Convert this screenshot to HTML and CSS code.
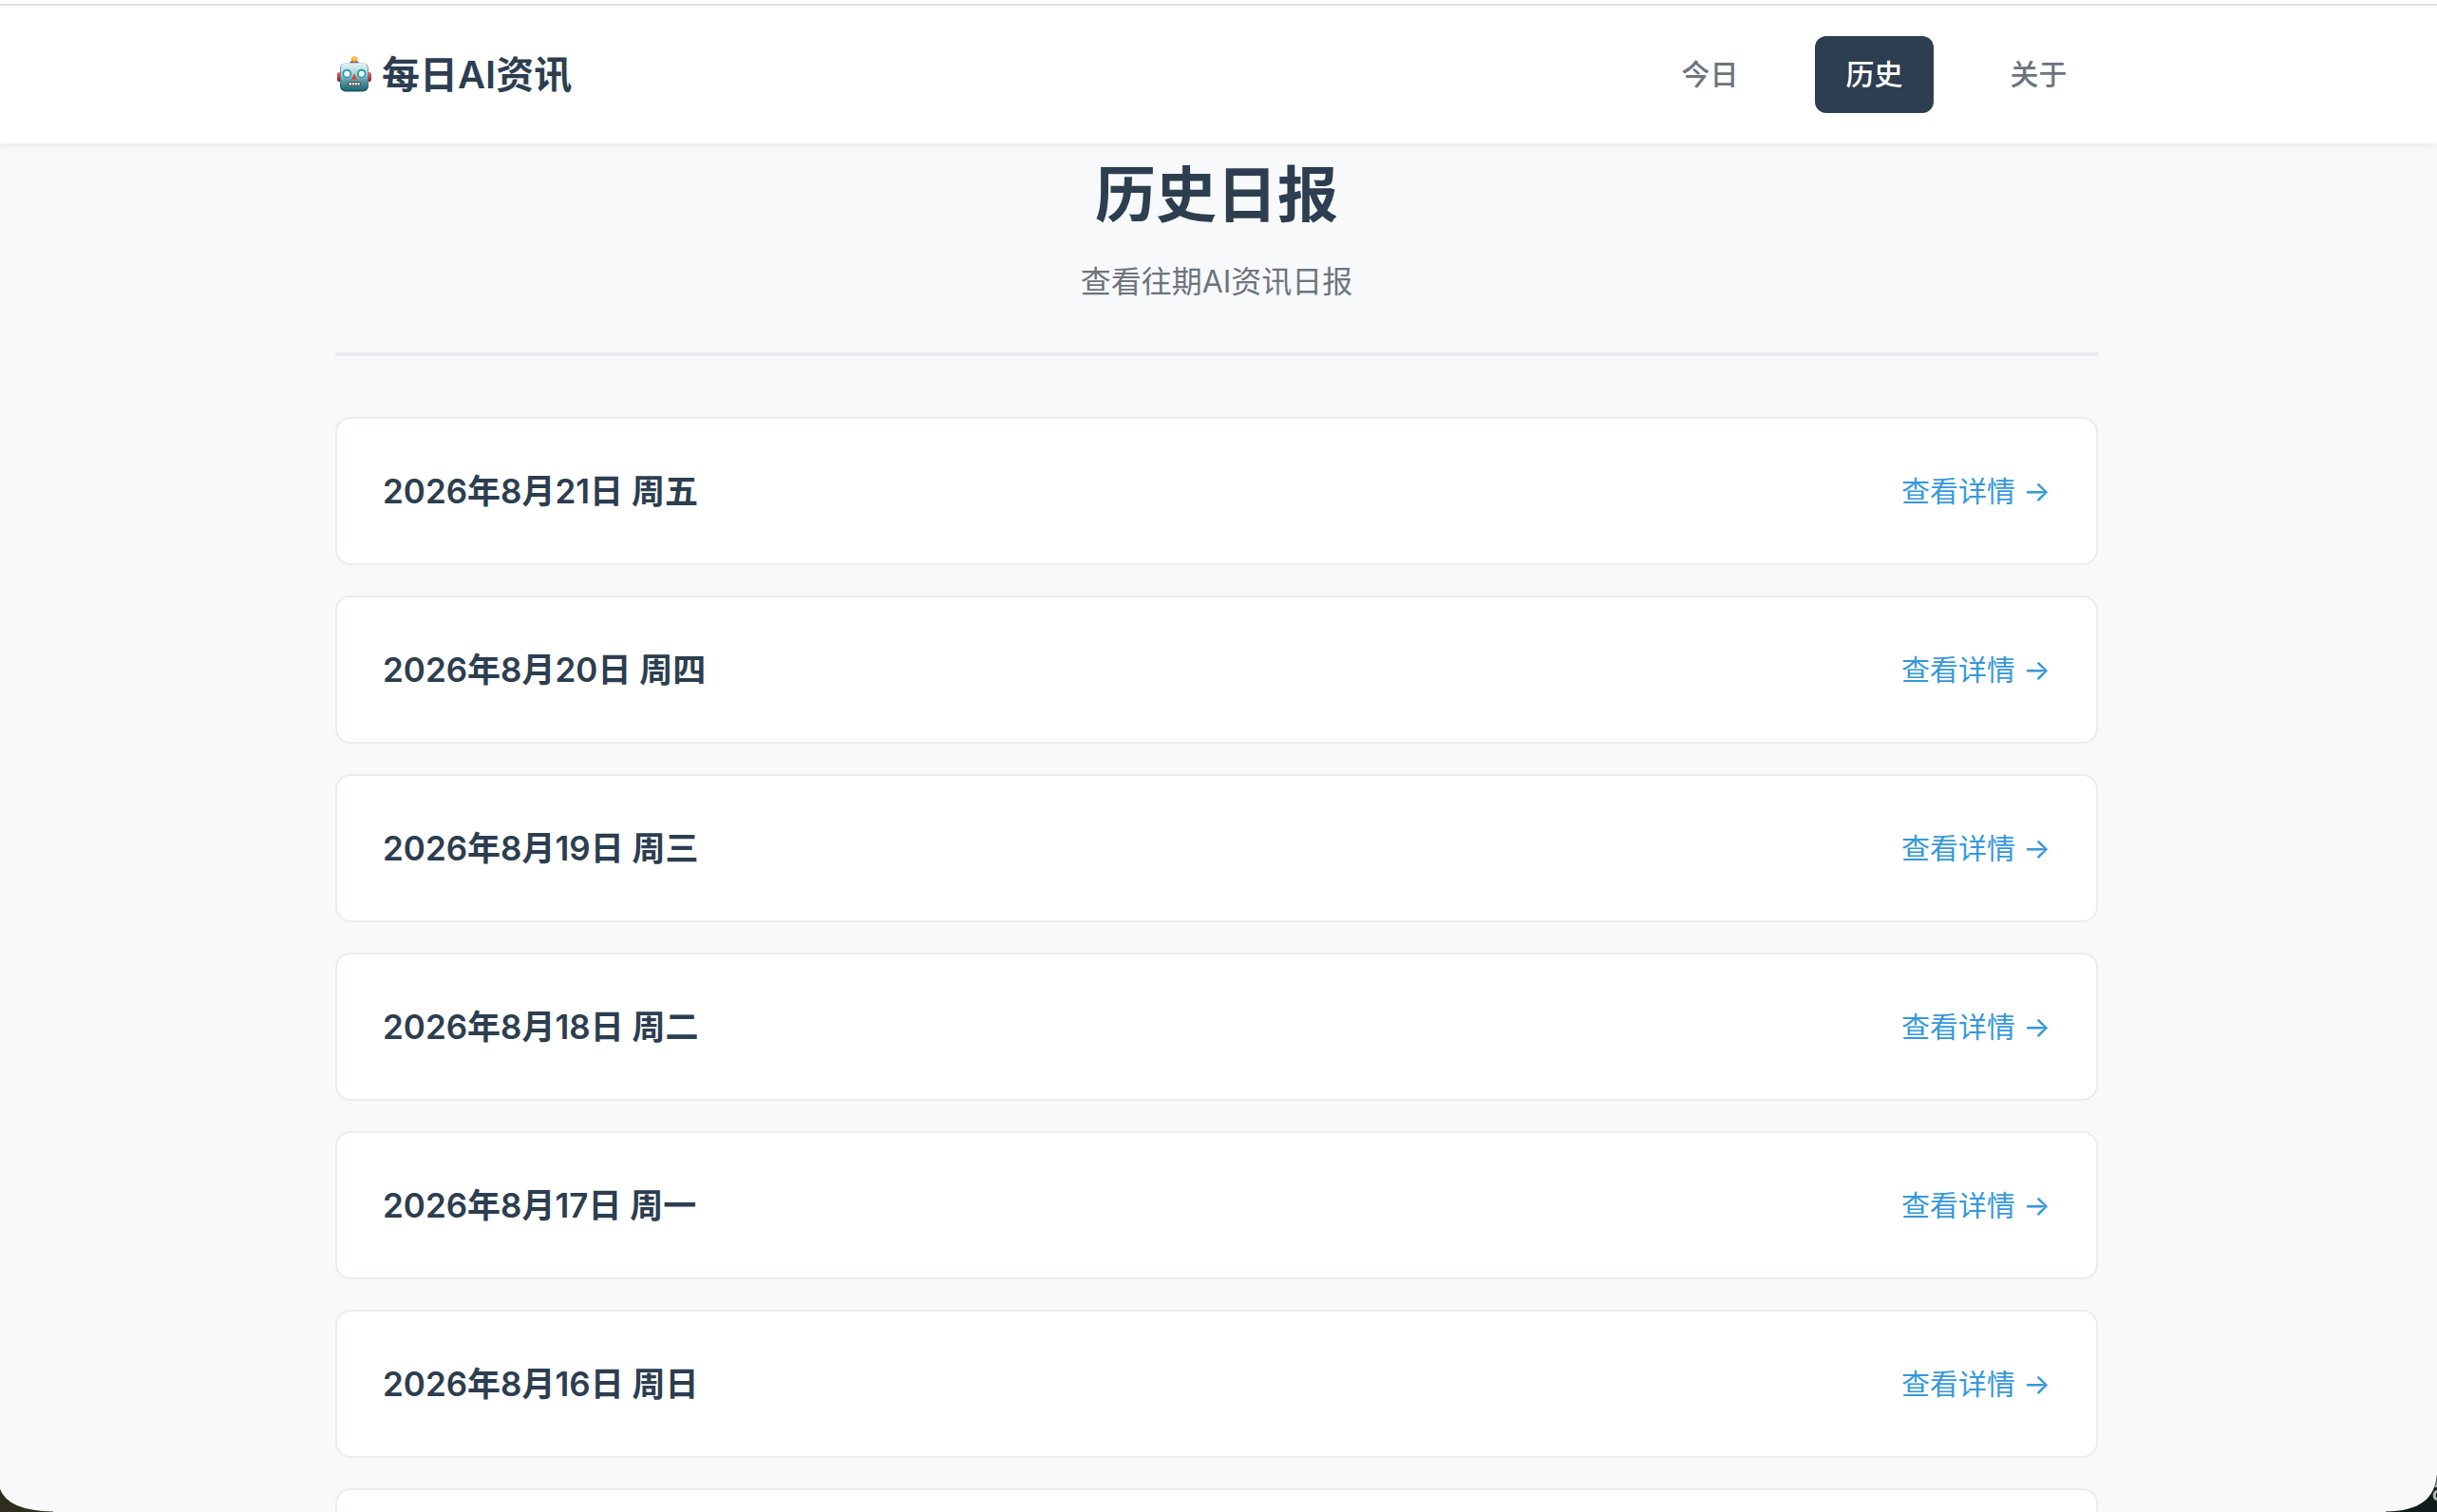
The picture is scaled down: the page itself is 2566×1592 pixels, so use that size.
FILE: index.html
```html
<!DOCTYPE html>
<html lang="zh-CN">
<head>
<meta charset="utf-8">
<meta name="viewport" content="width=device-width, initial-scale=1">
<title>历史日报 - 每日AI资讯</title>
<link rel="stylesheet" href="styles.css">
</head>
<body>
<div class="window">
  <header class="site-header">
    <div class="container header-inner">
      <a class="logo" href="#">
        <svg class="logo-icon" viewBox="0 0 36 38" preserveAspectRatio="xMidYMin" aria-hidden="true">
          <defs>
            <linearGradient id="face" x1="0" y1="0" x2="0" y2="1">
              <stop offset="0" stop-color="#e6f5f4"/>
              <stop offset=".35" stop-color="#b5d8d9"/>
              <stop offset=".65" stop-color="#5c9ba3"/>
              <stop offset="1" stop-color="#1f6a74"/>
            </linearGradient>
            <radialGradient id="bulb" cx=".5" cy=".4" r=".6">
              <stop offset="0" stop-color="#ffe45c"/>
              <stop offset="1" stop-color="#f28a12"/>
            </radialGradient>
            <linearGradient id="ear" x1="0" y1="0" x2="0" y2="1">
              <stop offset="0" stop-color="#f06a60"/>
              <stop offset="1" stop-color="#9c1524"/>
            </linearGradient>
          </defs>
          <rect x="0" y="17" width="5" height="10" rx="2" fill="url(#ear)"/>
          <rect x="31" y="17" width="5" height="10" rx="2" fill="url(#ear)"/>
          <path d="M13 8.500c0-3 2-3.500 5-3.500s5 .5 5 3.500z" fill="#5d4a82"/>
          <circle cx="18" cy="3.300" r="3.100" fill="url(#bulb)"/>
          <rect x="3" y="7.500" width="30" height="30" rx="6" fill="#155762"/>
          <rect x="3.500" y="7.200" width="29" height="28.800" rx="6" fill="url(#face)"/>
          <circle cx="10.300" cy="18.500" r="4.800" fill="#259dbb"/>
          <circle cx="25.700" cy="18.500" r="4.800" fill="#259dbb"/>
          <circle cx="10.300" cy="18.800" r="3" fill="#fff"/>
          <circle cx="25.700" cy="18.800" r="3" fill="#fff"/>
          <path d="M18 18.500l3.200 6.200h-6.400z" fill="#d9453f"/>
          <rect x="11" y="27" width="14" height="4.500" rx="2" fill="#454b50"/>
          <path d="M12.500 29.200h2.400m.9 0h2m.9 0h2m.9 0h2" stroke="#fff" stroke-width="2.600"/>
        </svg>
        <span>每日AI资讯</span>
      </a>
      <nav class="nav">
        <a class="nav-link" href="#">今日</a>
        <a class="nav-link active" href="#" aria-current="page">历史</a>
        <a class="nav-link" href="#">关于</a>
      </nav>
    </div>
  </header>
  <main class="container">
    <div class="page-header">
      <h1>历史日报</h1>
      <p>查看往期AI资讯日报</p>
    </div>
    <ul class="report-list">
      <li class="card"><h2>2026年8月21日 周五</h2><a href="#">查看详情 →</a></li>
      <li class="card"><h2>2026年8月20日 周四</h2><a href="#">查看详情 →</a></li>
      <li class="card"><h2>2026年8月19日 周三</h2><a href="#">查看详情 →</a></li>
      <li class="card"><h2>2026年8月18日 周二</h2><a href="#">查看详情 →</a></li>
      <li class="card"><h2>2026年8月17日 周一</h2><a href="#">查看详情 →</a></li>
      <li class="card"><h2>2026年8月16日 周日</h2><a href="#">查看详情 →</a></li>
      <li class="card"></li>
    </ul>
  </main>
</div>
<svg class="corner corner-left" viewBox="0 0 60 40" aria-hidden="true"><path d="M0 16Q9 39 56 39.500V40H0z" fill="#2f2e1e"/></svg>
<svg class="corner corner-right" viewBox="0 0 60 40" aria-hidden="true"><path d="M60 0C58 26 42 39 6 39.500V40H60z" fill="#101b1c"/><path d="M60 2C60 10 58 13 57 14h3z" fill="#a5a9a8"/><path d="M60 18a5 5 0 0 0 0 9" fill="none" stroke="#b4b6b5" stroke-width="3"/></svg>
</body>
</html>
```
FILE: styles.css
```css
* {
  box-sizing: border-box;
}

body {
  margin: 0;
  background: #f8f9fb;
  color: #2c3e50;
  font-family: Inter, "Noto Sans CJK SC", sans-serif;
}

h1, h2, p, ul {
  margin: 0;
  padding: 0;
}

a {
  color: inherit;
  text-decoration: none;
}

.window {
  height: 100vh;
  overflow: hidden;
  padding-right: 4px;
  border-top: 4px solid #fff;
}

.container {
  width: calc(100% - 64px);
  max-width: 1856px;
  margin: 0 auto;
}

.site-header {
  position: relative;
  margin-right: -4px;
  padding: 32px 4px 32px 0;
  background: #fff;
  border-top: 2px solid #e0e0e0;
  box-shadow: 0 2px 8px rgba(0, 0, 0, 0.08);
}

.header-inner {
  display: flex;
  align-items: center;
  justify-content: space-between;
}

.logo {
  display: flex;
  align-items: center;
  gap: 11px;
  padding-left: 2px;
  font-size: 40px;
  font-weight: 600;
  line-height: 64px;
}

.logo-icon {
  width: 36px;
  height: 40px;
}

.nav {
  display: flex;
  gap: 48px;
}

.nav-link {
  width: 125px;
  padding: 16px 0;
  border-radius: 12px;
  color: #6c757d;
  font-size: 30px;
  font-weight: 500;
  line-height: 49px;
  text-align: center;
}

.nav-link.active {
  background: #2c3e50;
  color: #fff;
}

.page-header {
  padding: 6px 0 48px;
  border-bottom: 4px solid #e9ecef;
  text-align: center;
}

.page-header h1 {
  margin-bottom: 18px;
  font-size: 64px;
  font-weight: 700;
  line-height: 96px;
}

.page-header p {
  color: #6c757d;
  font-size: 32px;
  line-height: 52px;
}

.report-list {
  display: grid;
  gap: 32px;
  margin-top: 64px;
  list-style: none;
}

.card {
  display: flex;
  align-items: center;
  justify-content: space-between;
  min-height: 156px;
  padding: 48px;
  border: 2px solid #e9ecef;
  border-radius: 16px;
  background: #fff;
}

.card h2 {
  font-size: 35px;
  font-weight: 600;
  line-height: 56px;
}

.card a {
  color: #3498db;
  font-size: 30px;
  line-height: 48px;
}

/* Desktop showing behind the rounded window corners */
.corner {
  position: fixed;
  bottom: 0;
  width: 60px;
  height: 40px;
}

.corner-left {
  left: 0;
}

.corner-right {
  right: 0;
}
```
